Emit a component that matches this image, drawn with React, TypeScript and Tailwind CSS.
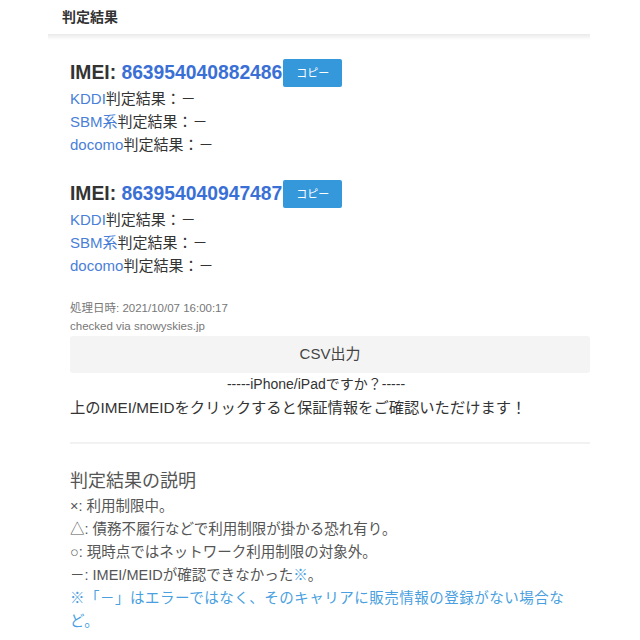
const font = { fontFamily: '"Liberation Sans", "Noto Sans CJK JP", sans-serif' };

type ImeiResult = {
  imei: string;
};

const results: ImeiResult[] = [
  { imei: '863954040882486' },
  { imei: '863954040947487' },
];

const carriers = ['KDDI', 'SBM系', 'docomo'];

function ResultBlock({ imei }: ImeiResult) {
  return (
    <div className="mb-[24px]">
      <div className="flex h-[28px] items-center">
        <span className="text-[19.3px] font-bold text-[#333]">
          IMEI: <span className="text-[#3a70d6]">{imei}</span>
        </span>
        <button className="ml-[1px] flex h-[28px] w-[59px] items-center justify-center rounded-[2px] bg-[#3498db] text-[11px] text-white">
          コピー
        </button>
      </div>
      {carriers.map((c) => (
        <div key={c} className="h-[23px] text-[15px] leading-[23px] text-[#333]">
          <span className="text-[#4a7fd8]">{c}</span>判定結果：－
        </div>
      ))}
    </div>
  );
}

export default function App() {
  return (
    <div className="min-h-[640px] bg-white" style={font}>
      <div className="ml-[48px] w-[542px]">
        {/* Header */}
        <div className="flex h-[34px] items-center pl-[14px] text-[14px] font-bold text-[#333]">
          判定結果
        </div>
        <div className="h-[6px] bg-gradient-to-b from-[#eaeaea] to-white" />

        <div className="pl-[22px] pt-[19px]">
          {results.map((r) => (
            <ResultBlock key={r.imei} imei={r.imei} />
          ))}

          <div className="mt-[-2px] text-[11.5px] leading-[18px] text-[#777]">
            <div>処理日時: 2021/10/07 16:00:17</div>
            <div>checked via snowyskies.jp</div>
          </div>

          <div className="mt-[1px] flex h-[37px] items-center justify-center rounded-[3px] bg-[#f4f4f4] text-[15px] text-[#444]">
            CSV出力
          </div>

          <div className="mt-[1px] h-[20px] pr-[28px] text-center text-[14px] leading-[20px] text-[#333]">
            -----iPhone/iPadですか？-----
          </div>
          <div className="mt-[2px] h-[24px] text-[15.3px] leading-[24px] text-[#333]">
            上のIMEI/MEIDをクリックすると保証情報をご確認いただけます！
          </div>

          <div className="mt-[22px] h-[2px] bg-[#f2f2f2]" />

          <div className="mt-[23px] h-[28px] text-[18px] leading-[28px] text-[#555]">
            判定結果の説明
          </div>
          <div className="text-[14.5px] leading-[23px] text-[#555]">
            <div>×: 利用制限中。</div>
            <div>△: 債務不履行などで利用制限が掛かる恐れ有り。</div>
            <div>○: 現時点ではネットワーク利用制限の対象外。</div>
            <div>
              －: IMEI/MEIDが確認できなかった<span className="text-[#4a9fe0]">※</span>。
            </div>
            <div className="tracking-[0.5px] text-[#4a9fe0]">
              ※「－」はエラーではなく、そのキャリアに販売情報の登録がない場合など。
            </div>
          </div>
        </div>
      </div>
    </div>
  );
}
